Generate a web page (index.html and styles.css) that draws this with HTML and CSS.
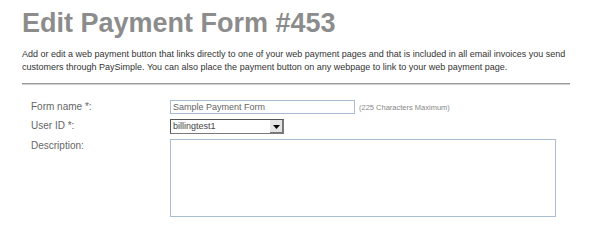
FILE: index.html
```html
<!DOCTYPE html>
<html>
<head>
<meta charset="utf-8">
<link rel="stylesheet" href="styles.css">
</head>
<body>
<div class="page">
  <h1 class="title">Edit Payment Form #453</h1>
  <p class="intro">Add or edit a web payment button that links directly to one of your web payment pages and that is included in all email invoices you send customers through PaySimple. You can also place the payment button on any webpage to link to your web payment page.</p>
  <div class="rule"></div>
  <div class="form">
    <div class="row">
      <div class="label">Form name *:</div>
      <div class="field">
        <div class="input">Sample Payment Form</div>
        <span class="hint">(225 Characters Maximum)</span>
      </div>
    </div>
    <div class="row">
      <div class="label">User ID *:</div>
      <div class="field">
        <div class="select"><span class="sel-text">billingtest1</span><span class="sel-btn"><svg width="7" height="4" viewBox="0 0 7 4"><path d="M0 0h7L3.5 4z" fill="#000"/></svg></span></div>
      </div>
    </div>
    <div class="row">
      <div class="label">Description:</div>
      <div class="field">
        <div class="textarea"></div>
      </div>
    </div>
  </div>
</div>
</body>
</html>
```

FILE: styles.css
```css
html, body {
  margin: 0;
  padding: 0;
  background: #fff;
}
.page {
  width: 548px;
  padding: 8px 0 0 22px;
  font-family: "Liberation Sans", Arial, sans-serif;
}
.title {
  margin: 0;
  font-size: 27px;
  line-height: 30px;
  font-weight: bold;
  color: #8c8c8c;
}
.intro {
  margin: 10px -14px 0 0;
  font-size: 9px;
  line-height: 13px;
  color: #333;
}
.rule {
  margin-top: 9px;
  height: 1px;
  background: #9a9a9a;
  border-bottom: 1px solid #d0d0d0;
}
.form {
  padding: 15px 0 0 9px;
}
.row {
  display: flex;
  margin-bottom: 5px;
}
.label {
  width: 139px;
  font-size: 10px;
  color: #666;
  line-height: 14px;
}
.field {
  display: flex;
  align-items: center;
  gap: 4px;
}
.input {
  box-sizing: border-box;
  width: 185px;
  height: 14px;
  border: 1px solid #a9bcd2;
  font-size: 9px;
  line-height: 12px;
  color: #666;
  padding-left: 2px;
}
.hint {
  font-size: 7.5px;
  color: #888;
}
.select {
  box-sizing: border-box;
  width: 114px;
  height: 15px;
  border: 1px solid #7a7a7a;
  border-top-color: #555;
  border-left-color: #555;
  display: flex;
  justify-content: space-between;
  align-items: stretch;
}
.sel-text {
  font-size: 9px;
  line-height: 13px;
  color: #444;
  padding-left: 2px;
}
.sel-btn {
  width: 13px;
  background: #e4e4e4;
  border-left: 1px solid #fff;
  box-shadow: inset -1px -1px 0 #777;
  display: flex;
  align-items: center;
  justify-content: center;
}
.textarea {
  box-sizing: border-box;
  width: 386px;
  height: 78px;
  border: 1px solid #a9bcd2;
  background: #fff;
}
```
